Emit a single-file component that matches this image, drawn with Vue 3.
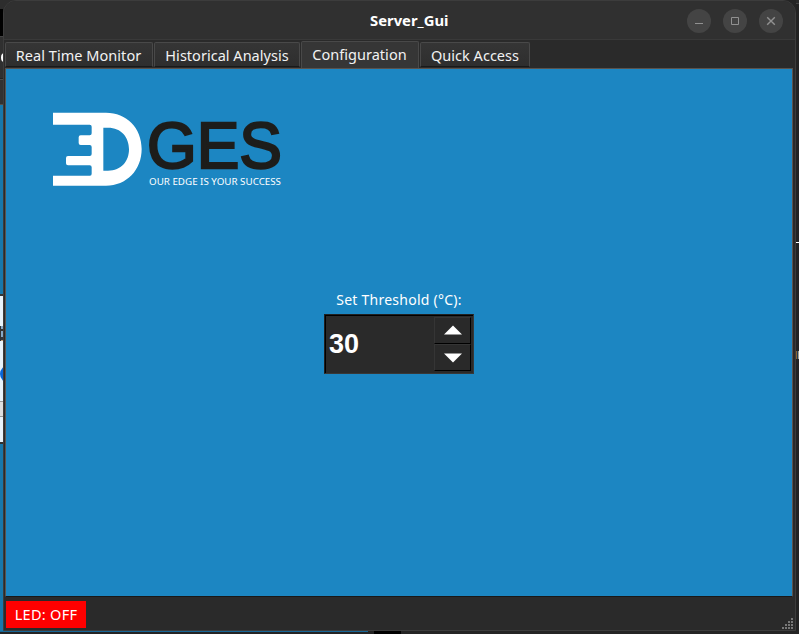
<script setup>
const tabs = [
  { id: 'monitor', label: 'Real Time Monitor' },
  { id: 'history', label: 'Historical Analysis' },
  { id: 'config', label: 'Configuration', active: true },
  { id: 'quick', label: 'Quick Access' },
]
</script>

<template>
  <div class="desktop">
    <div class="behind-left">
      <div class="b-top"></div>
      <div class="b-black"></div>
      <div class="b-head"><i></i></div>
      <div class="b-tab"></div>
      <div class="b-blue"></div>
      <div class="b-panel"><i class="letter"></i><i class="dot"></i><i class="field"></i></div>
    </div>
    <div class="behind-right"><i class="dash"></i><i class="spark"></i></div>
    <div class="behind-bottom"><i class="blue-line"></i><i class="black-box"></i></div>

    <main class="window">
      <header class="titlebar">
        <h1><svg width="80" height="24"><text x="0" y="17" textLength="78.5" lengthAdjust="spacingAndGlyphs">Server_Gui</text></svg></h1>
        <div class="controls">
          <button aria-label="Minimize"><svg viewBox="0 0 24 24"><path d="M8 14.5h8" /></svg></button>
          <button aria-label="Maximize"><svg viewBox="0 0 24 24"><path d="M8.5 8.5h7v7h-7z" /></svg></button>
          <button aria-label="Close"><svg viewBox="0 0 24 24"><path class="cross" d="M8.2 8.2l7.6 7.6M15.8 8.2l-7.6 7.6" /></svg></button>
        </div>
      </header>
      <nav class="tabs">
        <button v-for="t in tabs" :key="t.id" :class="['tab', t.id, { active: t.active }]">{{ t.label }}</button>
      </nav>
      <section class="page">
        <svg class="logo" viewBox="0 0 750 285">
          <path class="mark" fill-rule="evenodd" d="M39 38H198C260 38 305 84 305 147S260 257 198 257H39V227H150Q155 227 155 221V202Q155 196 149 196H84Q78 196 78 190V174Q78 168 84 168H149Q155 168 155 162V141Q155 135 149 135H122Q116 135 116 129V112Q116 106 122 106H149Q155 106 155 100V80Q155 74 149 74H39ZM190 83V212H204C244 212 267 184 267 148S244 83 204 83Z" />
          <text class="name" x="321" y="204" textLength="405" lengthAdjust="spacingAndGlyphs">GES</text>
          <text class="slogan" x="327" y="256" textLength="396" lengthAdjust="spacingAndGlyphs">OUR EDGE IS YOUR SUCCESS</text>
        </svg>
        <div class="setting">
          <label>Set Threshold (°C):</label>
          <div class="spinbox">
            <span class="value">30</span>
            <div class="steps">
              <button class="up" aria-label="Increase"><svg viewBox="0 0 18 10"><path d="M0 9.5L9 .5l9 9z" /></svg></button>
              <button aria-label="Decrease"><svg viewBox="0 0 18 10"><path d="M0 .5h18L9 9.5z" /></svg></button>
            </div>
          </div>
        </div>
      </section>
      <footer class="status">
        <span class="led">LED: OFF</span>
        <svg class="grip" viewBox="0 0 12 12"><path d="M9 0h2v2H9zM6 3h2v2H6zM9 3h2v2H9zM3 6h2v2H3zM6 6h2v2H6zM9 6h2v2H9zM0 9h2v2H0zM3 9h2v2H3zM6 9h2v2H6zM9 9h2v2H9z" /></svg>
      </footer>
    </main>
  </div>
</template>

<style>
body { margin: 0; overflow: hidden; }
</style>

<style scoped>
* { box-sizing: border-box; }
button { border: 0; padding: 0; margin: 0; font: inherit; color: inherit; }
.desktop { position: relative; width: 799px; height: 634px; padding-left: 3px; background: #242424; overflow: hidden; font-family: "Noto Sans", sans-serif; color: #fff; }
.window { position: relative; display: flex; flex-direction: column; width: 793px; height: 631px; border: 1px solid #3c3c3c; border-radius: 13px 13px 0 0; background: #2a2a2a; overflow: hidden; }

.behind-left { position: absolute; left: 0; top: 0; width: 16px; height: 631px; display: flex; flex-direction: column; background: #1877aa; }
.b-top { height: 9px; background: #2d2d2d; }
.b-black { height: 27px; background: linear-gradient(90deg, #000 3px, #2d2d2d 3px); }
.b-head { height: 43px; padding-top: 16px; background: #303030; border-top: 1px solid #444; border-bottom: 1px solid #222; }
.b-head i { display: block; width: 7px; height: 9px; border-radius: 50%; background: #fff; margin-left: .5px; }
.b-tab { height: 26px; background: #323232; border-top: 1px solid #4b4b4b; border-bottom: 1px solid #554e49; }
.b-blue { height: 189px; }
.b-panel { position: relative; height: 150px; background: #e8f3fa; border-top: 2px solid #353535; border-bottom: 2px solid #303030; }
.b-panel i { position: absolute; left: 0; }
.letter { top: 30px; width: 4px; height: 15px; background: linear-gradient(#86a9c8 3px, #333 3px 5px, #86a9c8 5px 11px, #303842 11px 14px, #c9a888 14px); border-left: 1px solid #333; }
.b-panel .dot { left: 0; top: 69px; width: 18px; height: 18px; border-radius: 50%; background: #0865d8; }
.field { top: 105px; width: 4px; height: 16px; background: #dedede; border-top: 1px solid #999; border-bottom: 1px solid #999; }
.behind-right { position: absolute; left: 796px; top: 0; width: 3px; height: 634px; background: linear-gradient(#292929 0 3px, #444 3px 4px, #222 4px); }
.behind-right i { position: absolute; left: 0; }
.dash { top: 242px; width: 3px; height: 1px; background: #fff; }
.spark { top: 351px; width: 3px; height: 8px; background: linear-gradient(90deg, #8b642c 0 1px, #263a58 1px 2px, #a4a18b 2px); }
.behind-bottom { position: absolute; left: 0; top: 631px; width: 799px; height: 3px; background: #242424; }
.behind-bottom i { position: absolute; top: 0; }
.blue-line { left: 0; width: 368px; height: 1px; background: #176797; }
.black-box { left: 374px; width: 27px; height: 3px; background: #000; }

.titlebar { height: 39px; flex: none; display: flex; justify-content: flex-end; align-items: center; padding: 2px 12px 0 0; background: #303030; border-bottom: 1px solid #393939; }
h1 { margin: 0 237px 0 0; height: 24px; font-size: 14px; line-height: 24px; }
h1 svg { display: block; }
h1 text { fill: #fff; font: 700 14px "Noto Sans", sans-serif; }
.controls { display: flex; gap: 12px; }
.controls button { width: 24px; height: 24px; border-radius: 50%; background: #444; }
.controls svg { display: block; width: 24px; height: 24px; fill: none; stroke: #919191; stroke-width: 1; }
.controls .cross { stroke-width: 1.4; }

.tabs { position: relative; z-index: 1; height: 28px; flex: none; display: flex; align-items: flex-end; gap: 1px; padding: 0 0 1px 1px; background: #2a2a2a; }
.tab { height: 25px; white-space: nowrap; background: linear-gradient(#353535, #2e2e2e); border: 1px solid #494949; border-bottom-color: #191919; border-radius: 2px 2px 0 0; color: #f2f2f2; font-size: 14.5px; line-height: 23px; padding-top: 1px; }
.monitor { width: 148px; letter-spacing: .04px; padding-right: 1px; }
.history { width: 146px; letter-spacing: .02px; }
.config { width: 118px; letter-spacing: .02px; padding-right: 1px; }
.quick { width: 110px; letter-spacing: .02px; }
.tab.active { height: 27px; margin-bottom: -1px; border-bottom: 0; background: #363636; padding-top: 0; padding-bottom: 1px; }

.page { height: 529px; flex: none; display: flex; flex-direction: column; margin: 0 2px 0 1px; border: 1px solid #59534e; border-bottom: 1px solid #181818; background: #1c86c2; padding: 31px 0 0 34px; }
.logo { width: 250px; height: 95px; flex: none; }
.mark { fill: #fff; }
.name { fill: #1d1d1b; stroke: #1d1d1b; stroke-width: 7px; font: 400 196px "Liberation Sans", sans-serif; }
.slogan { fill: #fff; font: 400 29px "Noto Sans", sans-serif; }
.setting { width: 150px; margin: 93px 0 0 284px; display: flex; flex-direction: column; align-items: center; }
label { font-size: 14px; line-height: 24px; height: 26px; white-space: nowrap; letter-spacing: .24px; }
.spinbox { width: 150px; height: 60px; display: flex; justify-content: space-between; background: #2a2a2a; border: 1px solid; border-color: #202020 #383838 #383838 #202020; box-shadow: inset 1px 1px #000; }
.value { font: 700 27px/58px "Liberation Sans", sans-serif; padding-left: 4px; }
.steps { display: flex; flex-direction: column; margin: 2px 2px 2px 0; width: 37px; }
.steps button { height: 27px; background: #292929; border: 1px solid; border-color: #353535 #000 #000 #353535; display: flex; align-items: center; justify-content: center; }
.steps .up { padding-bottom: 2px; }
.steps svg { width: 18px; height: 10px; fill: #fff; }
.status { flex: 1; display: flex; align-items: flex-start; justify-content: space-between; padding: 4px 1px 0 2px; }
.led { width: 80px; height: 27px; background: #f00; text-align: center; font-size: 14.5px; line-height: 26px; letter-spacing: .3px; }
.grip { width: 12px; height: 12px; margin-top: 17px; fill: #777; }
</style>
